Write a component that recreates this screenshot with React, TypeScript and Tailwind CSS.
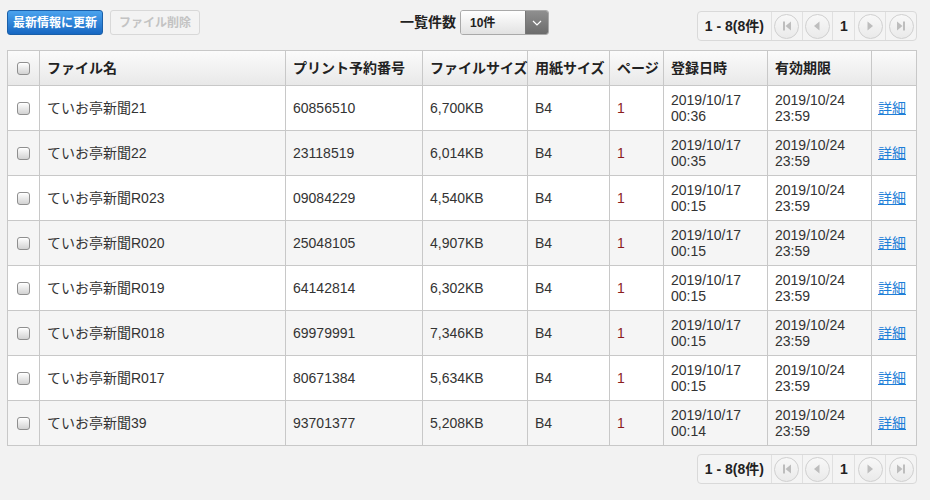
import React from "react";

interface FileRow {
  name: string;
  printNo: string;
  size: string;
  paper: string;
  pages: number;
  registered: [string, string];
  expires: [string, string];
}

const rows: FileRow[] = [
  { name: "ていお亭新聞21", printNo: "60856510", size: "6,700KB", paper: "B4", pages: 1, registered: ["2019/10/17", "00:36"], expires: ["2019/10/24", "23:59"] },
  { name: "ていお亭新聞22", printNo: "23118519", size: "6,014KB", paper: "B4", pages: 1, registered: ["2019/10/17", "00:35"], expires: ["2019/10/24", "23:59"] },
  { name: "ていお亭新聞R023", printNo: "09084229", size: "4,540KB", paper: "B4", pages: 1, registered: ["2019/10/17", "00:15"], expires: ["2019/10/24", "23:59"] },
  { name: "ていお亭新聞R020", printNo: "25048105", size: "4,907KB", paper: "B4", pages: 1, registered: ["2019/10/17", "00:15"], expires: ["2019/10/24", "23:59"] },
  { name: "ていお亭新聞R019", printNo: "64142814", size: "6,302KB", paper: "B4", pages: 1, registered: ["2019/10/17", "00:15"], expires: ["2019/10/24", "23:59"] },
  { name: "ていお亭新聞R018", printNo: "69979991", size: "7,346KB", paper: "B4", pages: 1, registered: ["2019/10/17", "00:15"], expires: ["2019/10/24", "23:59"] },
  { name: "ていお亭新聞R017", printNo: "80671384", size: "5,634KB", paper: "B4", pages: 1, registered: ["2019/10/17", "00:15"], expires: ["2019/10/24", "23:59"] },
  { name: "ていお亭新聞39", printNo: "93701377", size: "5,208KB", paper: "B4", pages: 1, registered: ["2019/10/17", "00:14"], expires: ["2019/10/24", "23:59"] },
];

const columns = [
  { label: "", width: "w-[32px]" },
  { label: "ファイル名", width: "w-[246px]" },
  { label: "プリント予約番号", width: "w-[137px]" },
  { label: "ファイルサイズ", width: "w-[105px]" },
  { label: "用紙サイズ", width: "w-[82px]" },
  { label: "ページ", width: "w-[54px]" },
  { label: "登録日時", width: "w-[104px]" },
  { label: "有効期限", width: "w-[104px]" },
  { label: "", width: "w-[45px]" },
];

function CheckBox() {
  return (
    <span className="block w-[13px] h-[13px] mx-auto rounded-[3px] border border-[#8f8f8f] bg-gradient-to-b from-[#ffffff] to-[#d2d2d2] shadow-[inset_0_1px_0_#fff]" />
  );
}

// 페이지 이동 원형 버튼
function NavCircle({ kind }: { kind: "first" | "prev" | "next" | "last" }) {
  return (
    <span className="flex items-center justify-center w-[25px] h-[25px] rounded-full border border-[#d0d0d0] bg-gradient-to-b from-[#f8f8f8] to-[#eaeaea]">
      <svg width="12" height="12" viewBox="0 0 12 12">
        {kind === "first" && (
          <>
            <rect x="2" y="1.5" width="2" height="9" fill="#bdbdbd" />
            <polygon points="10,1.5 10,10.5 4.5,6" fill="#bdbdbd" />
          </>
        )}
        {kind === "prev" && <polygon points="8.5,1.5 8.5,10.5 3,6" fill="#bdbdbd" />}
        {kind === "next" && <polygon points="3.5,1.5 3.5,10.5 9,6" fill="#bdbdbd" />}
        {kind === "last" && (
          <>
            <polygon points="2,1.5 2,10.5 7.5,6" fill="#bdbdbd" />
            <rect x="8" y="1.5" width="2" height="9" fill="#bdbdbd" />
          </>
        )}
      </svg>
    </span>
  );
}

function Pager() {
  return (
    <div className="flex h-[30px] w-[220px] rounded-[4px] border border-[#d9d9d9] bg-[#f4f4f4] text-[14px] font-bold text-[#222]">
      <div className="w-[73px] flex items-center justify-center">1 - 8(8件)</div>
      <div className="w-[31px] flex items-center justify-center border-l border-[#e0e0e0]">
        <NavCircle kind="first" />
      </div>
      <div className="w-[31px] flex items-center justify-center border-l border-[#e0e0e0]">
        <NavCircle kind="prev" />
      </div>
      <div className="w-[22px] flex items-center justify-center border-l border-[#e0e0e0]">1</div>
      <div className="w-[31px] flex items-center justify-center border-l border-[#e0e0e0]">
        <NavCircle kind="next" />
      </div>
      <div className="w-[31px] flex items-center justify-center border-l border-[#e0e0e0]">
        <NavCircle kind="last" />
      </div>
    </div>
  );
}

export default function App() {
  return (
    <div
      className="min-h-[500px] w-[930px] bg-[#f2f2f2] px-[7px] pt-[10px] text-[#333]"
      style={{ fontFamily: '"Liberation Sans", "Noto Sans CJK JP", sans-serif' }}
    >
      {/* 툴바 */}
      <div className="flex items-start h-[40px]">
        <div className="w-[393px] flex gap-[7px]">
          <button className="h-[25px] px-[5px] rounded-[3px] border border-[#1a5fa8] bg-gradient-to-b from-[#4aa3ee] to-[#1667c2] text-white text-[12px] font-bold">
            最新情報に更新
          </button>
          <button className="h-[25px] px-[8px] rounded-[3px] border border-[#d8d8d8] bg-[#f3f3f3] text-[#c3c3c3] text-[12px] font-bold">
            ファイル削除
          </button>
        </div>
        <div className="flex items-center gap-[4px] h-[25px]">
          <span className="text-[14px] font-bold text-[#222]">一覧件数</span>
          <div className="flex h-[25px] w-[89px] rounded-[3px] border border-[#a9a9a9] overflow-hidden">
            <div className="flex-1 flex items-center pl-[9px] bg-gradient-to-b from-[#ffffff] to-[#e2e2e2] text-[12px] font-bold text-[#222]">
              10件
            </div>
            <div className="w-[23px] flex items-center justify-center border-l border-[#777] bg-gradient-to-b from-[#8f8f8f] to-[#6c6c6c]">
              <svg width="10" height="6" viewBox="0 0 10 6">
                <polyline points="1,1 5,5 9,1" fill="none" stroke="#fff" strokeWidth="1.2" />
              </svg>
            </div>
          </div>
        </div>
        <div className="ml-auto mt-[1px] mr-[6px]">
          <Pager />
        </div>
      </div>

      {/* 목록 */}
      <table className="w-[909px] table-fixed border-collapse border border-[#c8c8c8] text-[14px]">
        <thead>
          <tr className="h-[35px] bg-gradient-to-b from-[#fbfbfb] to-[#e8e8e8]">
            {columns.map((col, i) => (
              <th
                key={i}
                className={`${col.width} border border-[#c8c8c8] px-[7px] text-left font-bold text-[#222] whitespace-nowrap`}
              >
                {i === 0 ? <CheckBox /> : col.label}
              </th>
            ))}
          </tr>
        </thead>
        <tbody>
          {rows.map((r, i) => (
            <tr key={r.printNo} className={`h-[45px] ${i % 2 === 0 ? "bg-white" : "bg-[#f5f5f5]"}`}>
              <td className="border border-[#c8c8c8]">
                <CheckBox />
              </td>
              <td className="border border-[#c8c8c8] px-[7px]">{r.name}</td>
              <td className="border border-[#c8c8c8] px-[7px]">{r.printNo}</td>
              <td className="border border-[#c8c8c8] px-[7px]">{r.size}</td>
              <td className="border border-[#c8c8c8] px-[7px]">{r.paper}</td>
              <td className="border border-[#c8c8c8] px-[7px] text-[#8c1c1c]">{r.pages}</td>
              <td className="border border-[#c8c8c8] px-[7px] leading-[16px]">
                {r.registered[0]}
                <br />
                {r.registered[1]}
              </td>
              <td className="border border-[#c8c8c8] px-[7px] leading-[16px]">
                {r.expires[0]}
                <br />
                {r.expires[1]}
              </td>
              <td className="border border-[#c8c8c8] px-[6px]">
                <a href="#" className="text-[#1f7fd8] underline">
                  詳細
                </a>
              </td>
            </tr>
          ))}
        </tbody>
      </table>

      <div className="flex justify-end mt-[8px] mr-[6px]">
        <Pager />
      </div>
    </div>
  );
}
